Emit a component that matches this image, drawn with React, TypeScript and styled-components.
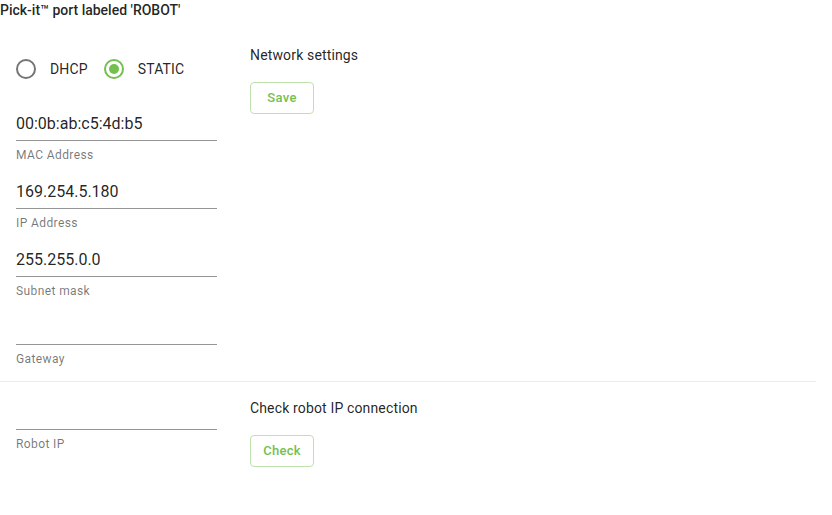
import React from "react";
import styled, { createGlobalStyle } from "styled-components";

const GREEN = "#74c04f";

const Global = createGlobalStyle`
  html, body { margin: 0; padding: 0; background: #fff; }
  body { font-family: Roboto, "Liberation Sans", Arial, sans-serif; color: rgba(0,0,0,0.87); }
`;

const Page = styled.div`
  width: 816px;
`;

const Title = styled.div`
  font-size: 14px;
  line-height: 20px;
  font-weight: 500;
  color: rgba(0, 0, 0, 0.87);
`;

const Section = styled.div<{ $top: number; $bottom: number }>`
  display: grid;
  grid-template-columns: 250px 1fr;
  padding-top: ${(p) => p.$top}px;
  padding-bottom: ${(p) => p.$bottom}px;
`;

const Divider = styled.div`
  height: 1px;
  background: #ebebeb;
`;

const LeftCol = styled.div`
  display: flex;
  flex-direction: column;
  gap: 11px;
  padding-left: 16px;
`;

const RightCol = styled.div<{ $offset?: number }>`
  display: flex;
  flex-direction: column;
  align-items: flex-start;
  padding-top: ${(p) => p.$offset ?? 0}px;
`;

const RadioRow = styled.div`
  display: flex;
  align-items: center;
  height: 48px;
  margin-bottom: 4px;
`;

const RadioOption = styled.label`
  display: inline-flex;
  align-items: center;
  gap: 14px;
  margin-right: 16px;
  font-size: 14px;
  line-height: 20px;
  letter-spacing: 0.15px;
  color: rgba(0, 0, 0, 0.87);
  cursor: pointer;
`;

const RadioCircle = styled.span<{ $checked: boolean }>`
  box-sizing: border-box;
  width: 20px;
  height: 20px;
  border-radius: 50%;
  border: 2px solid ${(p) => (p.$checked ? GREEN : "#757575")};
  display: inline-flex;
  align-items: center;
  justify-content: center;
  &::after {
    content: "";
    width: 10px;
    height: 10px;
    border-radius: 50%;
    background: ${GREEN};
    display: ${(p) => (p.$checked ? "block" : "none")};
  }
`;

const Field = styled.div`
  width: 201px;
  display: flex;
  flex-direction: column;
`;

const InputBox = styled.div`
  box-sizing: border-box;
  height: 33px;
  padding: 6px 0 7px;
  border-bottom: 1px solid #949494;
  font-size: 16px;
  line-height: 19px;
  color: rgba(0, 0, 0, 0.87);
`;

const Helper = styled.div`
  margin-top: 4px;
  font-size: 12px;
  line-height: 20px;
  letter-spacing: 0.4px;
  color: rgba(0, 0, 0, 0.54);
`;

const Heading = styled.div`
  font-size: 14px;
  line-height: 20px;
  letter-spacing: 0.15px;
  color: rgba(0, 0, 0, 0.87);
  margin-bottom: 17px;
`;

const OutlineButton = styled.button`
  box-sizing: border-box;
  width: 64px;
  height: 32px;
  border: 1px solid #bfe2ad;
  border-radius: 4px;
  background: #fff;
  color: ${GREEN};
  font-family: Roboto, "Liberation Sans", Arial, sans-serif;
  font-size: 13px;
  font-weight: 500;
  letter-spacing: 0.3px;
  line-height: 20px;
  padding: 0 0 1px;
  cursor: pointer;
`;

const TextField = ({ value, label }: { value: string; label: string }) => (
  <Field>
    <InputBox>{value}</InputBox>
    <Helper>{label}</Helper>
  </Field>
);

export default function App() {
  return (
    <Page>
      <Global />
      <Title>Pick-it™ port labeled 'ROBOT'</Title>
      <Section $top={25} $bottom={12}>
        <LeftCol>
          <RadioRow>
            <RadioOption>
              <RadioCircle $checked={false} />
              DHCP
            </RadioOption>
            <RadioOption>
              <RadioCircle $checked={true} />
              STATIC
            </RadioOption>
          </RadioRow>
          <TextField value="00:0b:ab:c5:4d:b5" label="MAC Address" />
          <TextField value="169.254.5.180" label="IP Address" />
          <TextField value="255.255.0.0" label="Subnet mask" />
          <TextField value="" label="Gateway" />
        </LeftCol>
        <RightCol>
          <Heading>Network settings</Heading>
          <OutlineButton>Save</OutlineButton>
        </RightCol>
      </Section>
      <Divider />
      <Section $top={15} $bottom={40}>
        <LeftCol>
          <TextField value="" label="Robot IP" />
        </LeftCol>
        <RightCol $offset={1}>
          <Heading>Check robot IP connection</Heading>
          <OutlineButton>Check</OutlineButton>
        </RightCol>
      </Section>
    </Page>
  );
}
